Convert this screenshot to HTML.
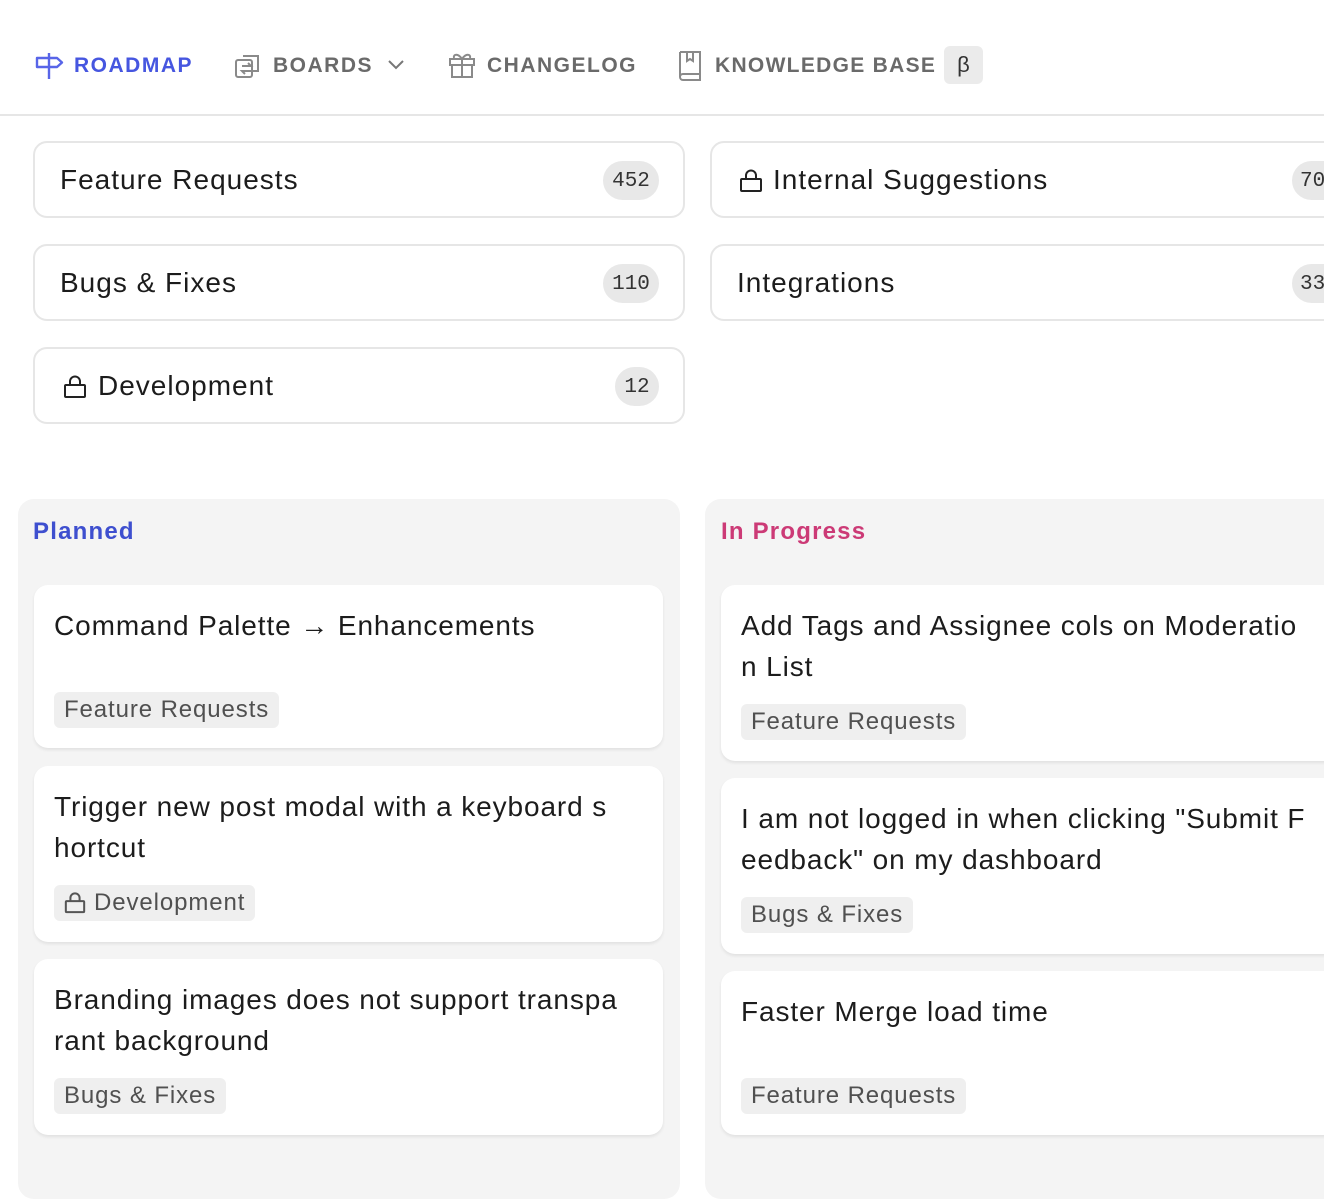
<!DOCTYPE html>
<html><head><meta charset="utf-8"><style>
*{box-sizing:border-box;margin:0;padding:0}
body{width:1324px;height:1140px;overflow:hidden;background:#fff;font-family:"Liberation Sans",sans-serif;color:#1c1c1c;position:relative}
.a{position:absolute}
.nav{font-size:21px;font-weight:bold;letter-spacing:1.5px;color:#6a6a6a;top:54px;white-space:nowrap}
.hr{left:0;top:114px;width:1324px;height:2px;background:#e6e6e6}
.board{height:77px;border:2px solid #e6e6e6;border-radius:14px;background:#fff;font-size:28px;letter-spacing:1px;display:flex;align-items:center;padding-left:25px;overflow:hidden}
.cnt{position:absolute;top:18px;height:39px;border-radius:20px;background:#e8e8e8;font-family:"Liberation Mono",monospace;font-size:21px;color:#333;display:flex;align-items:center;justify-content:center;letter-spacing:0;padding-top:2px}
.col{background:#f4f4f4;border-radius:16px}
.ch{font-size:24px;font-weight:bold;letter-spacing:1.2px;top:518px}
.card{background:#fff;border-radius:14px;box-shadow:0 2px 3px rgba(0,0,0,.08);padding:20px 20px 0 20px;overflow:hidden}
.t{font-size:28px;line-height:41px;letter-spacing:.9px;white-space:nowrap}
.tag{position:absolute;left:20px;height:36px;background:#efefef;border-radius:6px;padding:0 10px;font-size:24px;color:#505050;display:flex;align-items:center;letter-spacing:.9px}
</style></head><body>
<svg class="a" style="left:34px;top:51px" width="32" height="30" viewBox="0 0 32 30" fill="none" stroke="#5865e8" stroke-width="2.4" stroke-linejoin="round"><path d="M15 2v26M3 7h20l5 4.5-5 4.5H3z"/></svg>
<div class="a nav" style="left:74px;color:#4656e0">ROADMAP</div>
<svg class="a" style="left:234px;top:52px" width="28" height="28" viewBox="0 0 28 28" fill="none" stroke="#8a8a8a" stroke-width="2"><rect x="2" y="8" width="16" height="17" rx="2"/><path d="M9 4h15v15h-5M8 14h9l-3-3M17 19H8l3 3"/></svg>
<div class="a nav" style="left:273px">BOARDS</div>
<svg class="a" style="left:386px;top:57px" width="20" height="14" viewBox="0 0 20 14" fill="none" stroke="#777" stroke-width="2"><path d="M3 4l7 7 7-7"/></svg>
<svg class="a" style="left:447px;top:50px" width="30" height="30" viewBox="0 0 30 30" fill="none" stroke="#8a8a8a" stroke-width="2"><rect x="3" y="9" width="24" height="6"/><rect x="5" y="15" width="20" height="12"/><path d="M15 9v18M15 9c-4-6-9-5-8-1M15 9c4-6 9-5 8-1"/></svg>
<div class="a nav" style="left:487px">CHANGELOG</div>
<svg class="a" style="left:677px;top:49px" width="26" height="32" viewBox="0 0 26 32" fill="none" stroke="#8a8a8a" stroke-width="2"><path d="M3 3h20v22H6a3 3 0 0 0 0 6h17V25M3 28V3M10 3v9l3-2 3 2V3"/></svg>
<div class="a nav" style="left:715px;letter-spacing:1.3px">KNOWLEDGE BASE</div>
<div class="a" style="left:944px;top:46px;width:39px;height:38px;background:#ebebeb;border-radius:6px;font-size:22px;color:#333;display:flex;align-items:center;justify-content:center">β</div>
<div class="a hr"></div>

<div class="a board" style="left:33px;top:141px;width:652px">Feature Requests<div class="cnt" style="left:568px;width:56px">452</div></div>
<div class="a board" style="left:33px;top:244px;width:652px">Bugs &amp; Fixes<div class="cnt" style="left:568px;width:56px">110</div></div>
<div class="a board" style="left:33px;top:347px;width:652px"><svg width="24" height="24" viewBox="0 0 24 24" fill="none" stroke="#222" stroke-width="2" style="margin:2px 11px 0 3px"><path d="M7 10V6.5a5 5 0 0 1 10 0V10"/><rect x="2" y="10" width="20" height="12" rx="1"/></svg>Development<div class="cnt" style="left:580px;width:44px">12</div></div>
<div class="a board" style="left:710px;top:141px;width:640px"><svg width="24" height="24" viewBox="0 0 24 24" fill="none" stroke="#222" stroke-width="2" style="margin:2px 10px 0 2px"><path d="M7 10V6.5a5 5 0 0 1 10 0V10"/><rect x="2" y="10" width="20" height="12" rx="1"/></svg>Internal Suggestions<div class="cnt" style="left:580px;width:56px;justify-content:flex-start;padding-left:8px">70</div></div>
<div class="a board" style="left:710px;top:244px;width:640px">Integrations<div class="cnt" style="left:580px;width:56px;justify-content:flex-start;padding-left:8px">33</div></div>

<div class="a col" style="left:18px;top:499px;width:662px;height:700px"></div>
<div class="a col" style="left:705px;top:499px;width:700px;height:700px"></div>
<div class="a ch" style="left:33px;color:#3e4fcf">Planned</div>
<div class="a ch" style="left:721px;color:#cc3a76">In Progress</div>

<div class="a card" style="left:34px;top:585px;width:629px;height:163px"><div class="t">Command Palette → Enhancements</div><div class="tag" style="top:107px">Feature Requests</div></div>
<div class="a card" style="left:34px;top:766px;width:629px;height:176px"><div class="t">Trigger new post modal with a keyboard s<br>hortcut</div><div class="tag" style="top:119px"><svg width="22" height="22" viewBox="0 0 24 24" fill="none" stroke="#555" stroke-width="2.2" style="margin-right:8px"><path d="M7 10V6.5a5 5 0 0 1 10 0V10"/><rect x="2" y="10" width="20" height="12" rx="1"/></svg>Development</div></div>
<div class="a card" style="left:34px;top:959px;width:629px;height:176px"><div class="t">Branding images does not support transpa<br>rant background</div><div class="tag" style="top:119px">Bugs &amp; Fixes</div></div>

<div class="a card" style="left:721px;top:585px;width:640px;height:176px"><div class="t">Add Tags and Assignee cols on Moderatio<br>n List</div><div class="tag" style="top:119px">Feature Requests</div></div>
<div class="a card" style="left:721px;top:778px;width:640px;height:176px"><div class="t">I am not logged in when clicking "Submit F<br>eedback" on my dashboard</div><div class="tag" style="top:119px">Bugs &amp; Fixes</div></div>
<div class="a card" style="left:721px;top:971px;width:640px;height:164px"><div class="t">Faster Merge load time</div><div class="tag" style="top:107px">Feature Requests</div></div>
</body></html>
